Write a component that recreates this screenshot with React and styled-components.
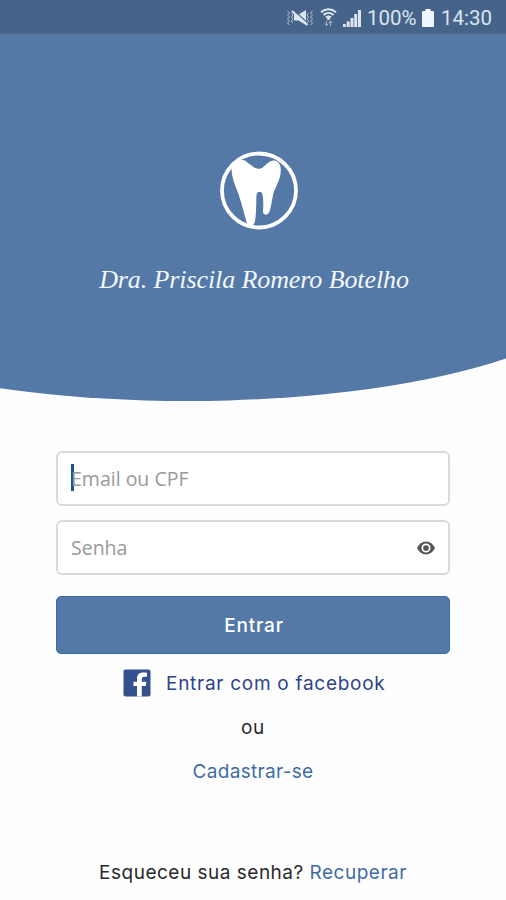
import React, {useState} from 'react';
import styled, {createGlobalStyle} from 'styled-components';

const GlobalStyle = createGlobalStyle`
  * {
    box-sizing: border-box;
  }

  body {
    margin: 0;
    background: #fefefe;
  }
`;

const Screen = styled.main`
  display: flex;
  flex-direction: column;
  width: 506px;
  height: 900px;
  overflow: hidden;
  background: #fefefe;
  font-family: 'Inter', sans-serif;
`;

// Wider than the screen, so that only part of the rounded bottom shows
const Hero = styled.header`
  flex: none;
  width: 858px;
  height: 401px;
  margin-left: -242px;
  padding: 0 110px 0 242px;
  background: #5479a7;
  border-radius: 0 0 429px 429px / 0 0 128px 128px;
`;

const StatusBar = styled.div`
  display: flex;
  align-items: center;
  justify-content: flex-end;
  height: 34px;
  padding: 2px 14px 0 0;
  background: #466489;
  color: #dce5f0;
  font: 20.5px 'Roboto', sans-serif;

  svg {
    display: block;
    flex: none;
  }
`;

const StatusIcons = styled.div`
  display: flex;
  align-items: center;
  gap: 6px;
`;

const Percent = styled.span`
  width: 50px;
  margin: 0 5px 0 6px;
  white-space: nowrap;
`;

const Clock = styled.span`
  margin-left: 7px;
`;

const Brand = styled.div`
  display: flex;
  flex-direction: column;
  align-items: center;
  padding: 117px 0 0 12px;
`;

const BrandName = styled.h1`
  margin: 33px 5px 0 -5px;
  color: #f3f8ff;
  font: italic 400 26px/32px 'Liberation Serif', serif;
  letter-spacing: -0.1px;
  white-space: nowrap;
`;

const Form = styled.form`
  display: flex;
  flex-direction: column;
  width: 394px;
  margin: 50px 0 0 56px;
`;

const Field = styled.label`
  display: flex;
  align-items: center;
  height: 55px;
  margin-bottom: 14px;
  padding: 0 13px 0 13px;
  border: 2px solid #dadada;
  border-radius: 6px;
  background: #fff;
`;

const Caret = styled.span`
  flex: none;
  width: 3px;
  height: 27px;
  margin: -2px -3px 0 0;
  background: #185596;
`;

const Input = styled.input`
  flex: 1;
  min-width: 0;
  height: 30px;
  padding: 0;
  border: 0;
  outline: 0;
  background: transparent;
  color: #444;
  caret-color: #185596;
  font: 19.5px 'Open Sans', sans-serif;

  &::placeholder {
    color: #999;
    opacity: 1;
  }
`;

const EyeButton = styled.button`
  display: flex;
  padding: 0;
  border: 0;
  background: none;
  color: #555;
`;

const Submit = styled.button`
  height: 58px;
  margin-top: 7px;
  padding: 0 0 0 2px;
  border: 1px solid #386da1;
  border-radius: 5px;
  background: #5479a7;
  color: #fff;
  font: 500 19px 'Inter', sans-serif;
  letter-spacing: 0.8px;
`;

const Facebook = styled.a`
  display: flex;
  align-items: center;
  gap: 15px;
  height: 28px;
  margin: 15px 0 0 123px;
  color: #2d4488;
  font-size: 19px;
  letter-spacing: 0.72px;
  white-space: nowrap;
`;

const Line = styled.p`
  margin: ${({$top}) => $top}px 0 0;
  color: #292929;
  font-size: 19px;
  line-height: 24px;
  letter-spacing: ${({$spacing}) => $spacing}px;
  text-align: center;
  white-space: nowrap;
`;

const Link = styled.a`
  color: #3e6ca6;
`;

const MuteIcon = () => (
  <svg width="28" height="20" viewBox="0 0 28 20" fill="none" stroke="currentColor">
    <path d="M1.500 3l2 2-2 2 2 2-2 2 2 2-2 2 2 2M5.500 5l1.500 2-1.500 2 1.500 2-1.500 2 1.500 2M26.500 3l-2 2 2 2-2 2 2 2-2 2 2 2-2 2M22.500 5L21 7l1.500 2-1.500 2 1.500 2-1.500 2" opacity=".7" />
    <path d="M8 6.500h4.500L20 2v15l-7.500-4.500H8z" fill="currentColor" stroke="none" />
    <path d="M8.500 3L20 13.500" stroke="#466489" strokeWidth="1.300" />
    <path d="M6 3l15.500 14" strokeWidth="2" />
  </svg>
);

const WifiIcon = () => (
  <svg width="17" height="20" viewBox="0 0 17 20" fill="none" stroke="currentColor" strokeWidth="2">
    <path d="M1 4.200c4.500-4 10.500-4 15 0M3.500 7c3-2.700 7-2.700 10 0M6 9.500c1.500-1.300 3.500-1.300 5 0" />
    <path d="M8.500 9v3" strokeWidth="2.500" />
    <path d="M6.500 12.500v5M4.800 15.500l1.700 2 1.700-2M10.500 18v-5M8.800 15l1.700-2 1.700 2" strokeWidth="1" opacity=".6" />
  </svg>
);

const SignalIcon = () => (
  <svg width="18" height="18" viewBox="0 0 18 18" fill="currentColor">
    <path d="M0 15h2.800v3H0zM3.700 12.500h3V18h-3zM7.500 9h3v9h-3zM11.200 5h3v13h-3zM15 1h3v17h-3z" />
  </svg>
);

const BatteryIcon = () => (
  <svg width="12" height="18" viewBox="0 0 12 18">
    <path d="M3.500 0h5v2H11q1 0 1 1v14q0 1-1 1H1q-1 0-1-1V3q0-1 1-1h2.500z" fill="#eff6ff" />
  </svg>
);

const ToothLogo = () => (
  <svg width="80" height="80" viewBox="0 0 80 80">
    <circle cx="40" cy="39.500" r="37" fill="none" stroke="#fff" strokeWidth="3.800" />
    <path
      fill="#fff"
      d="M15 12C20 7.500 25 8 29 12C34 15.500 36 17.800 40 17.800C45 17.800 47 11 54 9.500C59 9 61.800 13 61.800 19C61.800 28 57 35 54.500 42C52.500 50 52 60 49 62.800C46 65 43.800 63 44 60C44.500 54 44.500 48 43.300 43C42.500 40 38.500 40 37.700 43C37 47 37.500 54 37 60C36.500 66 36.500 71 34.500 73.500C32 76 29 74 27.500 71C25 62 22.500 52 19.500 43C16 34 13 27 12.700 20C12.500 16 13 14 15 12Z"
    />
  </svg>
);

const EyeIcon = () => (
  <svg width="18" height="14" viewBox="0 0 18 14">
    <path d="M0 7C2 2.700 5.200.5 9 .5S16 2.700 18 7c-2 4.300-5.200 6.500-9 6.500S2 11.300 0 7z" fill="currentColor" />
    <circle cx="9" cy="7" r="3.700" fill="none" stroke="#fff" strokeWidth="1.700" />
  </svg>
);

const FacebookIcon = () => (
  <svg width="28" height="28" viewBox="0 0 28 28">
    <rect x=".5" y=".5" width="27" height="27" rx="2" fill="#34508f" />
    <path d="M14 27.500V17h-3.500v-4.300H14V9.500C14 5.600 16.500 3.500 20 3.500c1.800 0 3 .1 4 .3v3.900h-2.700c-2 0-2.500 1-2.500 2.500v2.500h4.600l-.7 4.300h-3.900v10.500z" fill="#fff" />
  </svg>
);

const App = () => {
  const [visible, setVisible] = useState(false);

  return (
    <Screen>
      <GlobalStyle />
      <Hero>
        <StatusBar>
          <StatusIcons>
            <MuteIcon />
            <WifiIcon />
            <SignalIcon />
          </StatusIcons>
          <Percent>100%</Percent>
          <BatteryIcon />
          <Clock>14:30</Clock>
        </StatusBar>
        <Brand>
          <ToothLogo />
          <BrandName>Dra. Priscila Romero Botelho</BrandName>
        </Brand>
      </Hero>
      <Form onSubmit={(e) => e.preventDefault()}>
        <Field>
          <Caret />
          <Input placeholder="Email ou CPF" />
        </Field>
        <Field>
          <Input type={visible ? 'text' : 'password'} placeholder="Senha" />
          <EyeButton type="button" aria-label="Mostrar senha" onClick={() => setVisible((v) => !v)}>
            <EyeIcon />
          </EyeButton>
        </Field>
        <Submit>Entrar</Submit>
      </Form>
      <Facebook>
        <FacebookIcon />
        Entrar com o facebook
      </Facebook>
      <Line $top={19} $spacing={0.7}>ou</Line>
      <Line $top={20} $spacing={0.3}>
        <Link>Cadastrar-se</Link>
      </Line>
      <Line $top={77} $spacing={0.5}>
        Esqueceu sua senha? <Link>Recuperar</Link>
      </Line>
    </Screen>
  );
};

export default App;
